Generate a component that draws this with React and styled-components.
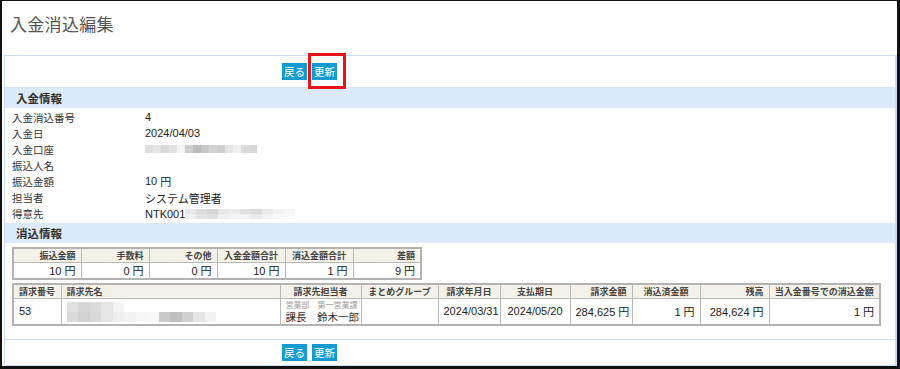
import React from 'react';
import styled, { createGlobalStyle } from 'styled-components';

const GlobalStyle = createGlobalStyle`
  body {
    margin: 0;
    background: #fff;
    font-family: "Liberation Sans", "Noto Sans CJK JP", sans-serif;
    color: #333;
  }
`;

// Page frame
const Frame = styled.div`
  box-sizing: border-box;
  width: 900px;
  height: 369px;
  border-style: solid;
  border-color: #111;
  border-width: 1px 3px 3px 2px;
  padding-left: 2px;
  overflow: hidden;
`;

const Title = styled.h1`
  box-sizing: border-box;
  height: 54px;
  margin: 0;
  padding: 10px 0 0 6px;
  font-size: 17px;
  font-weight: normal;
  color: #555;
  letter-spacing: 0.3px;
`;

const Panel = styled.div`
  box-sizing: border-box;
  height: 311px;
  border: 1px solid #c9dcf1;
  border-right-width: 2px;
  display: flex;
  flex-direction: column;
`;

const ButtonBar = styled.div`
  display: flex;
  gap: 5px;
  height: ${p => p.$height}px;
  align-items: center;
  padding-left: 277px;
  border-${p => p.$side}: 1px solid #d3e3f4;
`;

const Button = styled.button`
  height: 17px;
  padding: 0 2px;
  border: none;
  background: #139bd2;
  color: #fff;
  font-family: "Noto Sans CJK JP", sans-serif;
  font-size: 10.5px;
  line-height: 17px;
  cursor: pointer;
`;

const Marked = styled.span`
  position: relative;
  display: inline-flex;

  &::after {
    content: '';
    position: absolute;
    left: -4px;
    right: -9px;
    top: -10px;
    bottom: -9px;
    border: 3px solid #e8141a;
  }
`;

const SectionBar = styled.div`
  height: 20px;
  background: #dce9f8;
  padding-left: 11px;
  font-family: "Noto Sans CJK JP", sans-serif;
  font-weight: 600;
  font-size: 11.5px;
  line-height: 20px;
  color: #333;
`;

const InfoList = styled.div`
  padding: 1px 0 1px 7px;
  display: flex;
  flex-direction: column;
`;

const InfoRow = styled.div`
  display: grid;
  grid-template-columns: 133px 1fr;
  height: 16.1px;
  align-items: center;
  font-size: 11px;
`;

const Label = styled.span`
  font-family: "Noto Sans CJK JP", sans-serif;
  font-size: 10.5px;
  color: #333;
`;

const Value = styled.span`
  display: flex;
  align-items: center;
  color: #222;
`;

const Mosaic = styled.span`
  display: inline-grid;
  grid-template-columns: repeat(${p => p.$cols}, ${p => p.$w}px);
  grid-auto-rows: ${p => p.$h}px;
`;

const Tile = styled.span`
  background: ${p => p.$shade};
`;

const TableArea = styled.div`
  padding: 4px 0 0 7px;
  display: flex;
  flex-direction: column;
  gap: 3px;
  flex: 1;
`;

const Table = styled.table`
  border-collapse: collapse;
  border: 2px solid #b3b3b3;
  width: ${p => p.$width}px;
  table-layout: fixed;
  font-size: 11px;
`;

const Th = styled.th`
  height: 13px;
  padding: 0 5px;
  border: 1px solid #b8b8b8;
  background: #f4f1ea;
  font-family: "Noto Sans CJK JP", sans-serif;
  font-size: 9px;
  font-weight: 600;
  color: #444;
  text-align: ${p => p.$align || 'left'};
  white-space: nowrap;
  overflow: hidden;
  line-height: 13px;
`;

const Td = styled.td`
  height: ${p => p.$h || 14}px;
  padding: 0 5px;
  border: 1px solid #b8b8b8;
  background: #fff;
  color: #222;
  text-align: ${p => p.$align || 'left'};
  white-space: nowrap;
  line-height: 14px;
  vertical-align: middle;
`;

const Yen = styled.span`
  font-family: "Noto Sans CJK JP", sans-serif;
  margin-left: 3px;
`;

const Staff = styled.div`
  font-family: "Noto Sans CJK JP", sans-serif;
  display: flex;
  flex-direction: column;
  line-height: 11px;
`;

const Dept = styled.span`
  font-size: 8px;
  color: #999;
`;

const Person = styled.span`
  font-size: 10.5px;
  line-height: 13px;
  color: #333;
`;

const Jp = styled.span`
  font-family: "Noto Sans CJK JP", sans-serif;
`;

const TileGrid = ({ cols, w, h, shades }) => (
  <Mosaic $cols={cols} $w={w} $h={h}>
    {shades.map((s, i) => (
      <Tile key={i} $shade={s} />
    ))}
  </Mosaic>
);

const accountShades = [
  '#dedede', '#e6e6e6', '#d8d8d8', '#e2e2e2', '#f4f4f4', '#cfcfcf', '#bcbcbc',
  '#c6c6c6', '#d3d3d3', '#cecece', '#e5e5e5', '#f0f0f0', '#dbdbdb', '#d7d7d7',
];

const customerShades = [
  '#e8e8e8', '#dcdcdc', '#d4d4d4', '#e6e6e6', '#ececec', '#e1e1e1', '#dadada', '#e9e9e9', '#f1f1f1', '#f6f6f6',
  '#eeeeee', '#e4e4e4', '#dfdfdf', '#f0f0f0', '#f5f5f5', '#f2f2f2', '#ebebeb', '#f3f3f3', '#f8f8f8', '#fafafa',
];

const billShades = [
  '#e0e0e0', '#d6d6d6', '#dcdcdc', '#e6e6e6', '#f4f4f4', '#fff', '#fff', '#fff', '#fff', '#fff', '#fff', '#fff', '#fff',
  '#dadada', '#d2d2d2', '#d8d8d8', '#e6e6e6', '#eeeeee', '#f1f1f1', '#f5f5f5', '#f7f7f7', '#c9c9c9', '#bfbfbf', '#d0d0d0', '#e4e4e4', '#f2f2f2',
];

const info = [
  ['入金消込番号', '4'],
  ['入金日', '2024/04/03'],
  ['入金口座', <TileGrid cols={14} w={8} h={8} shades={accountShades} />],
  ['振込人名', ''],
  ['振込金額', <>10<Yen>円</Yen></>],
  ['担当者', <Jp>システム管理者</Jp>],
  ['得意先', <>NTK001<TileGrid cols={10} w={11} h={5} shades={customerShades} /></>],
];

const summaryHeaders = ['振込金額', '手数料', 'その他', '入金金額合計', '消込金額合計', '差額'];
const summaryHeaderAlign = ['right', 'right', 'right', 'center', 'center', 'right'];
const summaryValues = ['10', '0', '0', '10', '1', '9'];

const billHeaders = [
  ['請求番号', 'left', 48],
  ['請求先名', 'left', 219],
  ['請求先担当者', 'center', 81],
  ['まとめグループ', 'center', 77],
  ['請求年月日', 'center', 62],
  ['支払期日', 'center', 70],
  ['請求金額', 'right', 62],
  ['消込済金額', 'center', 68],
  ['残高', 'right', 69],
  ['当入金番号での消込金額', 'center', 111],
];

const Actions = ({ marked }) => (
  <>
    <Button>戻る</Button>
    {marked ? (
      <Marked>
        <Button>更新</Button>
      </Marked>
    ) : (
      <Button>更新</Button>
    )}
  </>
);

const App = () => (
  <>
    <GlobalStyle />
    <Frame>
      <Title>入金消込編集</Title>
      <Panel>
        <ButtonBar $height={31} $side="bottom">
          <Actions marked />
        </ButtonBar>
        <SectionBar>入金情報</SectionBar>
        <InfoList>
          {info.map(([label, value]) => (
            <InfoRow key={label}>
              <Label>{label}</Label>
              <Value>{value}</Value>
            </InfoRow>
          ))}
        </InfoList>
        <SectionBar>消込情報</SectionBar>
        <TableArea>
          <Table $width={410}>
            <thead>
              <tr>
                {summaryHeaders.map((h, i) => (
                  <Th key={h} $align={summaryHeaderAlign[i]}>{h}</Th>
                ))}
              </tr>
            </thead>
            <tbody>
              <tr>
                {summaryValues.map((v, i) => (
                  <Td key={i} $align="right">
                    {v}<Yen>円</Yen>
                  </Td>
                ))}
              </tr>
            </tbody>
          </Table>
          <Table $width={867}>
            <colgroup>
              {billHeaders.map(([h, , w]) => (
                <col key={h} style={{ width: w }} />
              ))}
            </colgroup>
            <thead>
              <tr>
                {billHeaders.map(([h, align]) => (
                  <Th key={h} $align={align}>{h}</Th>
                ))}
              </tr>
            </thead>
            <tbody>
              <tr>
                <Td $h={25}>53</Td>
                <Td $h={25}>
                  <TileGrid cols={13} w={11.5} h={10} shades={billShades} />
                </Td>
                <Td $h={25}>
                  <Staff>
                    <Dept>営業部　第一営業課</Dept>
                    <Person>課長　鈴木一郎</Person>
                  </Staff>
                </Td>
                <Td $h={25} />
                <Td $h={25} $align="center">2024/03/31</Td>
                <Td $h={25} $align="center">2024/05/20</Td>
                <Td $h={25} $align="right">284,625<Yen>円</Yen></Td>
                <Td $h={25} $align="right">1<Yen>円</Yen></Td>
                <Td $h={25} $align="right">284,624<Yen>円</Yen></Td>
                <Td $h={25} $align="right">1<Yen>円</Yen></Td>
              </tr>
            </tbody>
          </Table>
        </TableArea>
        <ButtonBar $height={25} $side="top">
          <Actions />
        </ButtonBar>
      </Panel>
    </Frame>
  </>
);

export default App;
